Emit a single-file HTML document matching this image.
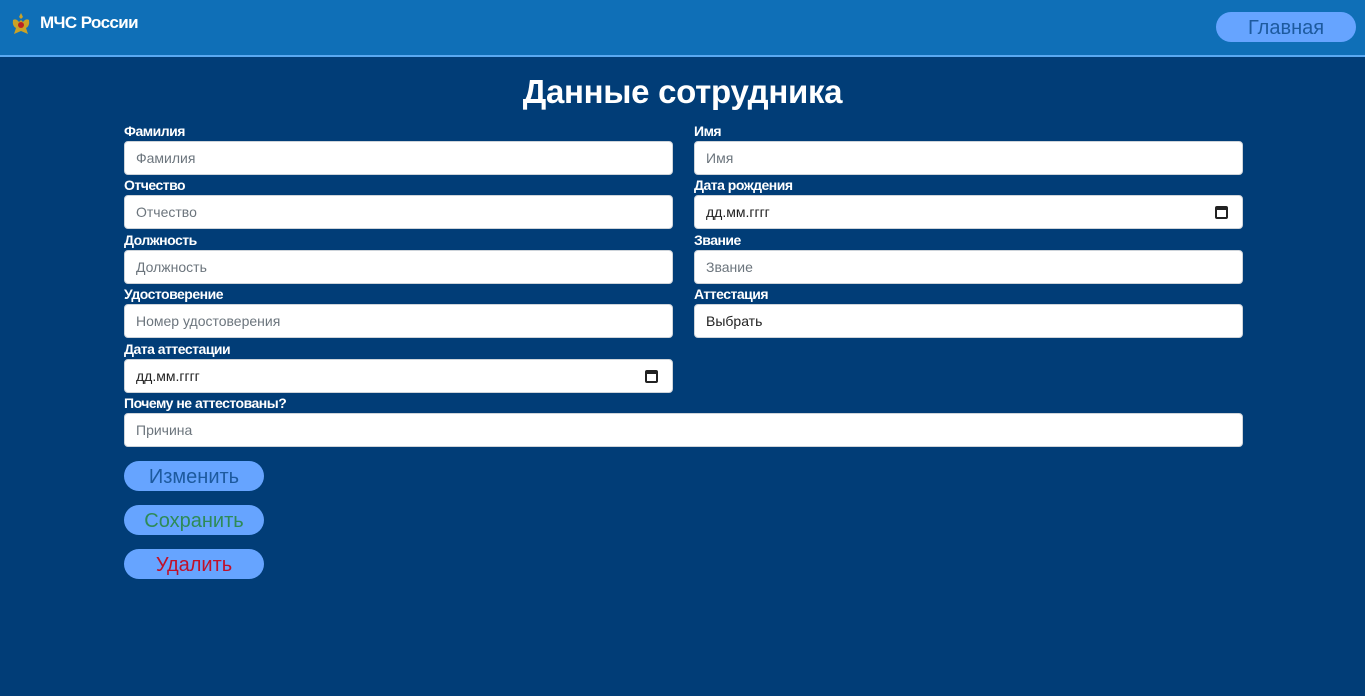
<!DOCTYPE html>
<html><head><meta charset="utf-8"><style>
*{box-sizing:border-box;margin:0;padding:0}
body{width:1365px;height:696px;background:#013d77;font-family:"Liberation Sans",sans-serif;position:relative;overflow:hidden}
.hdr{position:absolute;left:0;top:0;width:1365px;background:#0f6fb7;border-bottom:2px solid #5aa9f2;height:57px}
.logo{position:absolute;left:40px;top:13px;color:#fff;font-weight:bold;font-size:17px;letter-spacing:-0.6px}
.btn{position:absolute;background:#66a4ff;border-radius:15px;text-align:center;font-size:20px}
h1{position:absolute;left:0;width:1365px;top:73px;text-align:center;color:#fff;font-size:33px;font-weight:bold;letter-spacing:-0.3px}
.lb{position:absolute;color:#fff;font-weight:bold;font-size:14px;letter-spacing:-0.5px}
.in{position:absolute;background:#fff;border-radius:4px;height:34px;font-size:14px;color:#6c757d;padding:8px 11px;border:1px solid #ced4da}
.dk{color:#222}
.cal{position:absolute;right:14px;top:10px;width:13px;height:13px;border:2px solid #222;border-top-width:4px;border-radius:2px}
</style></head><body>
<div class="hdr">
<svg style="position:absolute;left:10px;top:12px" width="22" height="24" viewBox="0 0 22 24"><path d="M11 1 L13 5 L11 7 L9 5Z M3 8 Q6 6 9 10 L11 8 L13 10 Q16 6 19 8 Q20 14 16 16 L18 22 L11 19 L4 22 L6 16 Q2 14 3 8Z" fill="#c9a227"/><circle cx="11" cy="13" r="3" fill="#b22"/></svg>
<div class="logo">МЧС России</div>
<div class="btn" style="left:1216px;top:12px;width:140px;height:30px;line-height:33px;color:#1d5a9e">Главная</div>
</div>
<h1>Данные сотрудника</h1>
<div class="lb" style="left:124px;top:123px">Фамилия</div>
<div class="in" style="left:124px;top:141px;width:549px">Фамилия</div>
<div class="lb" style="left:694px;top:123px">Имя</div>
<div class="in" style="left:694px;top:141px;width:549px">Имя</div>
<div class="lb" style="left:124px;top:177px">Отчество</div>
<div class="in" style="left:124px;top:195px;width:549px">Отчество</div>
<div class="lb" style="left:694px;top:177px">Дата рождения</div>
<div class="in dk" style="left:694px;top:195px;width:549px">дд.мм.гггг<div class="cal"></div></div>
<div class="lb" style="left:124px;top:232px">Должность</div>
<div class="in" style="left:124px;top:250px;width:549px">Должность</div>
<div class="lb" style="left:694px;top:232px">Звание</div>
<div class="in" style="left:694px;top:250px;width:549px">Звание</div>
<div class="lb" style="left:124px;top:286px">Удостоверение</div>
<div class="in" style="left:124px;top:304px;width:549px">Номер удостоверения</div>
<div class="lb" style="left:694px;top:286px">Аттестация</div>
<div class="in dk" style="left:694px;top:304px;width:549px">Выбрать</div>
<div class="lb" style="left:124px;top:341px">Дата аттестации</div>
<div class="in dk" style="left:124px;top:359px;width:549px">дд.мм.гггг<div class="cal"></div></div>
<div class="lb" style="left:124px;top:395px">Почему не аттестованы?</div>
<div class="in" style="left:124px;top:413px;width:1119px">Причина</div>
<div class="btn" style="left:124px;top:461px;width:140px;height:30px;line-height:33px;color:#1d5a9e">Изменить</div>
<div class="btn" style="left:124px;top:505px;width:140px;height:30px;line-height:33px;color:#2e8b57">Сохранить</div>
<div class="btn" style="left:124px;top:549px;width:140px;height:30px;line-height:33px;color:#c0102a">Удалить</div>
</body></html>
